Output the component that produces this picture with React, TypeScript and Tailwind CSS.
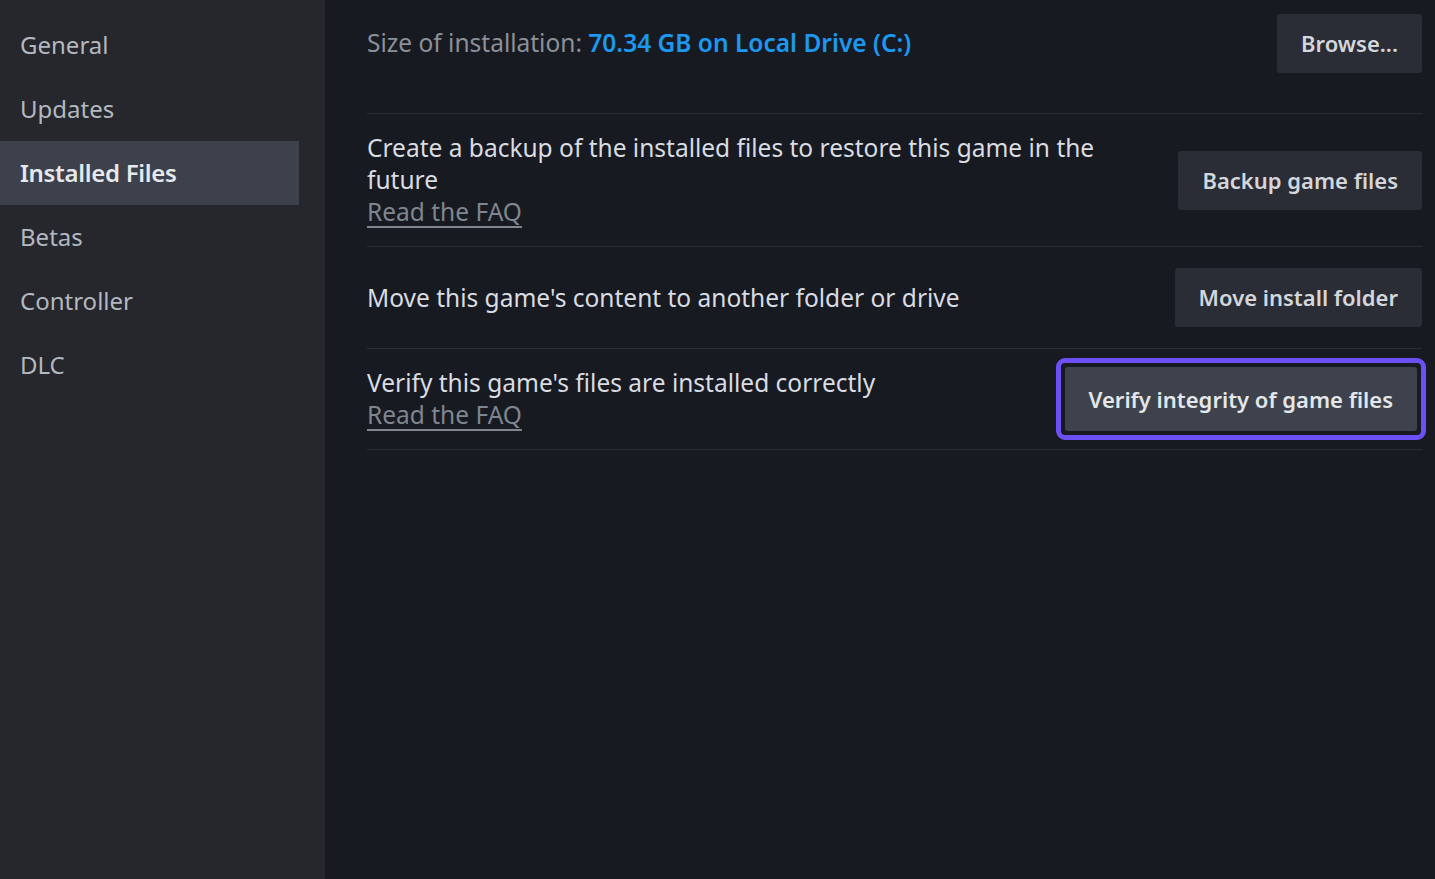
const navItems = ['General', 'Updates', 'Installed Files', 'Betas', 'Controller', 'DLC'];

const font = { fontFamily: '"Noto Sans", "Open Sans", sans-serif' };

function Button({ label, active = false }: { label: string; active?: boolean }) {
  return (
    <button
      className={`px-[24px] rounded-[3px] text-[22px] font-semibold whitespace-nowrap ${
        active ? 'bg-[#3d424c] text-[#e4e6ea] h-[64px] px-[22px]' : 'bg-[#2a2d35] text-[#d3d6db] h-[59px]'
      }`}
    >
      {label}
    </button>
  );
}

function FaqLink() {
  return (
    <a className="block text-[#80868f] underline underline-offset-[5px] decoration-[#80868f] leading-[32px]">
      Read the FAQ
    </a>
  );
}

export default function App() {
  return (
    <div className="flex w-[1435px] h-[879px] overflow-hidden bg-[#171a21]" style={font}>
      <aside className="w-[325px] shrink-0 bg-[#25272d] pt-[13px]">
        {navItems.map((item) => (
          <div
            key={item}
            className={`w-[299px] h-[64px] flex items-center pl-5 text-[24px] ${
              item === 'Installed Files'
                ? 'bg-[#3c414c] text-[#e6e8eb] font-semibold tracking-[-0.3px]'
                : 'text-[#b4b8bf]'
            }`}
          >
            {item}
          </div>
        ))}
      </aside>

      <main className="flex-1 pl-[42px] pr-[13px] pt-[14px] text-[24.5px] text-[#d9dce1]">
        <div className="flex items-center justify-between pb-[40px] border-b border-[#2a2e36]">
          <p className="text-[#8c9199]">
            Size of installation:{' '}
            <span className="text-[#1c98f0] font-semibold">70.34 GB on Local Drive (C:)</span>
          </p>
          <Button label="Browse..." />
        </div>

        <div className="flex items-center justify-between gap-10 py-[18px] border-b border-[#2a2e36]">
          <div className="flex-1 leading-[32px]">
            <p>Create a backup of the installed files to restore this game in the future</p>
            <FaqLink />
          </div>
          <Button label="Backup game files" />
        </div>

        <div className="flex items-center justify-between py-[21px] border-b border-[#2a2e36]">
          <p className="leading-[32px]">Move this game's content to another folder or drive</p>
          <Button label="Move install folder" />
        </div>

        <div className="flex items-center justify-between py-[18px] border-b border-[#2a2e36]">
          <div className="leading-[32px]">
            <p>Verify this game's files are installed correctly</p>
            <FaqLink />
          </div>
          <div className="-my-[10px] -mr-[4px] border-[5px] border-[#6c4ff5] rounded-[9px] p-[4px]">
            <Button label="Verify integrity of game files" active />
          </div>
        </div>
      </main>
    </div>
  );
}
